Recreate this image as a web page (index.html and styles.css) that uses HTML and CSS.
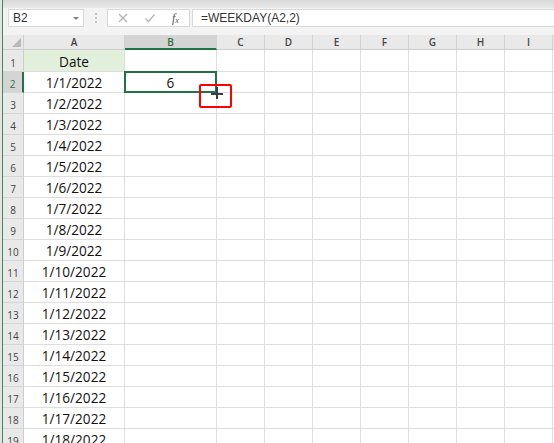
FILE: index.html
```html
<!DOCTYPE html>
<html>
<head>
<meta charset="utf-8">
<link rel="stylesheet" href="styles.css">
</head>
<body>
<div class="window">
  <div class="edge"></div>
  <div class="edge-green"></div>
  <div class="main">
    <div class="topstrip"></div>
    <div class="fbar">
      <div class="namebox"><span>B2</span><span class="ddarrow"></span></div>
      <div class="dots"><span></span><span></span><span></span></div>
      <div class="fxbtns">
        <svg class="ico" width="12" height="12" viewBox="0 0 12 12"><path d="M2 2 L10 10 M10 2 L2 10" stroke="#b4b4b4" stroke-width="1.3" fill="none"/></svg>
        <svg class="ico" width="12" height="12" viewBox="0 0 12 12"><path d="M1.5 6.5 L4.5 9.5 L10.5 2.5" stroke="#b4b4b4" stroke-width="1.3" fill="none"/></svg>
        <span class="fx">f<sub>x</sub></span>
      </div>
      <div class="formula">=WEEKDAY(A2,2)</div>
    </div>
    <div class="sheet">
      <div class="hrow">
        <div class="corner"><span class="tri"></span></div>
        <div class="colh">A</div>
        <div class="colh sel">B</div>
        <div class="colh narrow">C</div>
        <div class="colh narrow">D</div>
        <div class="colh narrow">E</div>
        <div class="colh narrow">F</div>
        <div class="colh narrow">G</div>
        <div class="colh narrow">H</div>
        <div class="colh narrow">I</div>
        <div class="colh narrow"></div>
      </div>
      <div class="row first"><div class="rh">1</div><div class="c ca hdr">Date</div><div class="c cb"></div><div class="rest"></div></div>
      <div class="row"><div class="rh sel">2</div><div class="c ca">1/1/2022</div><div class="c cb active">6</div><div class="rest"></div></div>
      <div class="row"><div class="rh">3</div><div class="c ca">1/2/2022</div><div class="c cb"></div><div class="rest"></div></div>
      <div class="row"><div class="rh">4</div><div class="c ca">1/3/2022</div><div class="c cb"></div><div class="rest"></div></div>
      <div class="row"><div class="rh">5</div><div class="c ca">1/4/2022</div><div class="c cb"></div><div class="rest"></div></div>
      <div class="row"><div class="rh">6</div><div class="c ca">1/5/2022</div><div class="c cb"></div><div class="rest"></div></div>
      <div class="row"><div class="rh">7</div><div class="c ca">1/6/2022</div><div class="c cb"></div><div class="rest"></div></div>
      <div class="row"><div class="rh">8</div><div class="c ca">1/7/2022</div><div class="c cb"></div><div class="rest"></div></div>
      <div class="row"><div class="rh">9</div><div class="c ca">1/8/2022</div><div class="c cb"></div><div class="rest"></div></div>
      <div class="row"><div class="rh">10</div><div class="c ca">1/9/2022</div><div class="c cb"></div><div class="rest"></div></div>
      <div class="row"><div class="rh">11</div><div class="c ca">1/10/2022</div><div class="c cb"></div><div class="rest"></div></div>
      <div class="row"><div class="rh">12</div><div class="c ca">1/11/2022</div><div class="c cb"></div><div class="rest"></div></div>
      <div class="row"><div class="rh">13</div><div class="c ca">1/12/2022</div><div class="c cb"></div><div class="rest"></div></div>
      <div class="row"><div class="rh">14</div><div class="c ca">1/13/2022</div><div class="c cb"></div><div class="rest"></div></div>
      <div class="row"><div class="rh">15</div><div class="c ca">1/14/2022</div><div class="c cb"></div><div class="rest"></div></div>
      <div class="row"><div class="rh">16</div><div class="c ca">1/15/2022</div><div class="c cb"></div><div class="rest"></div></div>
      <div class="row"><div class="rh">17</div><div class="c ca">1/16/2022</div><div class="c cb"></div><div class="rest"></div></div>
      <div class="row"><div class="rh">18</div><div class="c ca">1/17/2022</div><div class="c cb"></div><div class="rest"></div></div>
      <div class="row"><div class="rh">19</div><div class="c ca">1/18/2022</div><div class="c cb"></div><div class="rest"></div></div>
      <div class="redbox"></div>
      <div class="cur-h"></div>
      <div class="cur-v"></div>
    </div>
  </div>
</div>
</body>
</html>
```
FILE: styles.css
```css
html, body { margin: 0; padding: 0; }
body {
  width: 554px;
  height: 443px;
  overflow: hidden;
  background: #fff;
  font-family: "Open Sans", "Liberation Sans", sans-serif;
}
.window { display: flex; height: 443px; }
.edge { width: 2px; background: #e4e4e4; flex: none; }
.edge-green { width: 1px; background: #3f8a5c; flex: none; }
.main { flex: 1; display: flex; flex-direction: column; min-width: 0; }

.topstrip { height: 8px; background: linear-gradient(#d9d9d9, #e9e9e9); flex: none; }
.fbar {
  height: 27px;
  flex: none;
  box-sizing: border-box;
  background: #f3f3f3;
  display: flex;
  padding: 1px 0 0 5px;
}
.namebox, .fxbtns, .formula {
  height: 18px;
  box-sizing: border-box;
  background: #fff;
  border: 1px solid #d9d9d9;
  font-family: "Liberation Sans", Arial, sans-serif;
  font-size: 12px;
  color: #333;
}
.namebox {
  width: 76px;
  display: flex;
  align-items: center;
  justify-content: space-between;
  padding: 0 4px 0 4px;
}
.ddarrow {
  width: 0; height: 0;
  border-left: 3px solid transparent;
  border-right: 3px solid transparent;
  border-top: 3px solid #808080;
}
.dots {
  width: 23px;
  display: flex;
  flex-direction: column;
  align-items: center;
  justify-content: center;
  gap: 2px;
  height: 18px;
}
.dots span { width: 2px; height: 2px; background: #c4c4c4; }
.fxbtns {
  width: 83px;
  display: flex;
  align-items: center;
  padding-left: 9px;
  gap: 15px;
}
.fx {
  font-family: "Liberation Serif", serif;
  font-style: italic;
  font-size: 12px;
  color: #555;
  margin-left: 1px;
}
.fx sub { font-size: 8px; vertical-align: -1px; }
.formula {
  flex: 1;
  margin-left: 2px;
  border-right: none;
  padding-left: 8px;
  line-height: 16px;
}

.sheet { position: relative; flex: 1; overflow: hidden; }
.hrow {
  display: flex;
  height: 15px;
  background: #e9e9e9;
  border-bottom: 1px solid #cdcdcd;
  box-sizing: border-box;
}
.corner {
  width: 21px;
  flex: none;
  position: relative;
  box-sizing: border-box;
  border-right: 1px solid #cdcdcd;
}
.tri {
  position: absolute;
  right: 2px;
  bottom: 2px;
  width: 0; height: 0;
  border-left: 9px solid transparent;
  border-bottom: 9px solid #b9b9b9;
}
.colh {
  flex: none;
  box-sizing: border-box;
  border-right: 1px solid #d2d2d2;
  font-size: 10px;
  font-weight: 600;
  color: #444;
  display: flex;
  align-items: center;
  justify-content: center;
  width: 101px;
}
.colh.sel {
  width: 92px;
  background: #d4d4d4;
  color: #2f6d45;
  border-bottom: 2px solid #217346;
  margin-bottom: -1px;
}
.colh.narrow { width: 48px; }

.row {
  display: grid;
  grid-template-columns: 21px 101px 92px 1fr;
  height: 21px;
}
.row.first { height: 22px; }
.rh {
  background: #e9e9e9;
  border-right: 1px solid #cdcdcd;
  border-bottom: 1px solid #d6d6d6;
  box-sizing: border-box;
  font-size: 10px;
  color: #444;
  display: flex;
  align-items: flex-end;
  justify-content: center;
  padding-bottom: 2px;
  line-height: 12px;
}
.rh.sel {
  background: #d4d4d4;
  color: #2f6d45;
  border-right: 2px solid #217346;
}
.c {
  box-sizing: border-box;
  border-right: 1px solid #dedede;
  border-bottom: 1px solid #dedede;
  display: flex;
  align-items: flex-end;
  justify-content: center;
  font-size: 13.6px;
  line-height: 17px;
  color: #111;
  padding-bottom: 1px;
}
.c.hdr { background: #e2efda; }
.active { position: relative; }
.active::after {
  content: "";
  position: absolute;
  left: -1px; top: -1px; right: -1px; bottom: -1px;
  border: 2px solid #217346;
}
.rest {
  border-bottom: 1px solid #dedede;
  box-sizing: border-box;
  background-image: repeating-linear-gradient(to right, transparent 0 47px, #dedede 47px 48px);
}

.redbox {
  position: absolute;
  left: 196px;
  top: 49px;
  width: 33px;
  height: 24px;
  box-sizing: border-box;
  border: 2px solid #f00;
  border-radius: 2px;
  z-index: 3;
}
.cur-h, .cur-v {
  position: absolute;
  background: #3b3b45;
  z-index: 4;
}
.cur-h { left: 208px; top: 58px; width: 12px; height: 2px; }
.cur-v { left: 213px; top: 52px; width: 2px; height: 12px; }
```
